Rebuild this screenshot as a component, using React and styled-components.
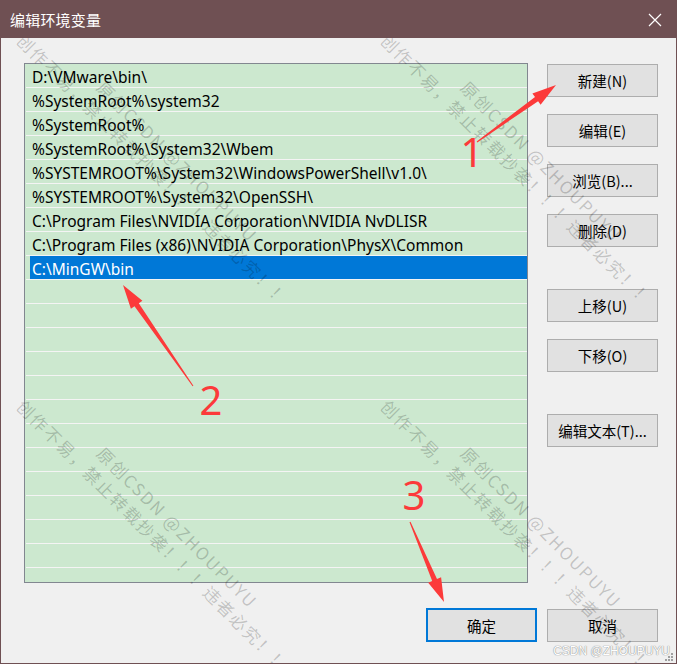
import React from "react";
import styled, { createGlobalStyle } from "styled-components";

const paths = [
  "D:\\VMware\\bin\\",
  "%SystemRoot%\\system32",
  "%SystemRoot%",
  "%SystemRoot%\\System32\\Wbem",
  "%SYSTEMROOT%\\System32\\WindowsPowerShell\\v1.0\\",
  "%SYSTEMROOT%\\System32\\OpenSSH\\",
  "C:\\Program Files\\NVIDIA Corporation\\NVIDIA NvDLISR",
  "C:\\Program Files (x86)\\NVIDIA Corporation\\PhysX\\Common",
  "C:\\MinGW\\bin",
];
const SELECTED = 8;
const TOTAL_ROWS = 22;

const sideButtons = [
  { label: "新建(N)" },
  { label: "编辑(E)" },
  { label: "浏览(B)..." },
  { label: "删除(D)" },
  { label: "上移(U)", gap: true },
  { label: "下移(O)" },
  { label: "编辑文本(T)...", gap: true },
];

// watermark tiles: origin of each rotated block
const tiles = [
  [44, 11],
  [408, 11],
  [44, 377],
  [408, 377],
];

// red annotation arrows (tail -> tip)
const arrows = [
  { tail: [477, 142], tip: [556, 85] },
  { tail: [193, 386], tip: [123, 285] },
  { tail: [410, 522], tip: [444, 602] },
];

const arrowPoints = ({ tail, tip }) => {
  const dx = tip[0] - tail[0];
  const dy = tip[1] - tail[1];
  const len = Math.hypot(dx, dy);
  const ux = dx / len;
  const uy = dy / len;
  const nx = -uy;
  const ny = ux;
  const headLen = 24;
  const headW = 7;
  const neckW = 2.6;
  const bx = tip[0] - ux * headLen;
  const by = tip[1] - uy * headLen;
  const p = (x, y) => `${x.toFixed(1)},${y.toFixed(1)}`;
  return [
    p(tail[0] + nx * 0.5, tail[1] + ny * 0.5),
    p(bx + nx * neckW, by + ny * neckW),
    p(bx + nx * headW, by + ny * headW),
    p(tip[0], tip[1]),
    p(bx - nx * headW, by - ny * headW),
    p(bx - nx * neckW, by - ny * neckW),
    p(tail[0] - nx * 0.5, tail[1] - ny * 0.5),
  ].join(" ");
};

const App = () => {
  return (
    <>
      <GlobalStyle />
      <Window>
        <TitleBar>
          <Title>编辑环境变量</Title>
          <CloseIcon width="14" height="14" viewBox="0 0 14 14">
            <path d="M1 1 L13 13 M13 1 L1 13" stroke="#fff" strokeWidth="1.2" />
          </CloseIcon>
        </TitleBar>

        <Content>
          <ListBox>
            {Array.from({ length: TOTAL_ROWS }).map((_, i) => (
              <Row key={i}>
                <Label $selected={i === SELECTED}>{paths[i] || ""}</Label>
              </Row>
            ))}
          </ListBox>
          <ButtonColumn>
            {sideButtons.map((b) => (
              <SideButton key={b.label} $gap={b.gap}>
                {b.label}
              </SideButton>
            ))}
          </ButtonColumn>
        </Content>

        <Footer>
          <DialogButton $primary>确定</DialogButton>
          <DialogButton>取消</DialogButton>
        </Footer>

        {tiles.map(([x, y], i) => (
          <Watermark key={i} style={{ left: x, top: y }}>
            <MarkLine $indent>原创CSDN @ZHOUPUYU</MarkLine>
            <MarkLine>创作不易，禁止转载抄袭！！！违者必究！！</MarkLine>
          </Watermark>
        ))}

        <Annotations width="677" height="664" viewBox="0 0 677 664">
          {arrows.map((a, i) => (
            <polygon key={i} points={arrowPoints(a)} fill="#fc3a3a" />
          ))}
          <Num x="472" y="167">1</Num>
          <Num x="211" y="415">2</Num>
          <Num x="414" y="510">3</Num>
        </Annotations>

        <Credit>CSDN @ZHOUPUYU</Credit>
        <Grip width="10" height="10" viewBox="0 0 10 10">
          {[
            [8, 2],
            [5, 5],
            [8, 5],
            [2, 8],
            [5, 8],
            [8, 8],
          ].map(([x, y]) => (
            <rect key={`${x}-${y}`} x={x - 1} y={y - 1} width="2" height="2" fill="#a0a0a0" />
          ))}
        </Grip>
      </Window>
    </>
  );
};

const GlobalStyle = createGlobalStyle`
  html, body {
    margin: 0;
    padding: 0;
    background: #f0f0f0;
  }
  * {
    box-sizing: border-box;
  }
`;

const Window = styled.div`
  position: relative;
  width: 677px;
  height: 664px;
  border: 1px solid #6f5053;
  background: #f0f0f0;
  display: flex;
  flex-direction: column;
  overflow: hidden;
  font-family: "Noto Sans CJK SC", sans-serif;
`;

const TitleBar = styled.div`
  position: relative;
  z-index: 3;
  height: 37px;
  flex-shrink: 0;
  background: #6f5053;
  display: flex;
  align-items: center;
  justify-content: space-between;
  padding: 0 14px 0 9px;
`;

const Title = styled.span`
  color: #fff;
  font-size: 15px;
  letter-spacing: 0.2px;
`;

const CloseIcon = styled.svg`
  display: block;
`;

const Content = styled.div`
  display: flex;
  padding: 25px 0 0 23px;
`;

const ListBox = styled.div`
  width: 504px;
  height: 520px;
  border: 1px solid #828790;
  background: #cce8cf;
  padding-left: 1px;
  overflow: hidden;
`;

const Row = styled.div`
  height: 24px;
  border-bottom: 1px solid #f4f4f4;
  display: flex;
`;

const Label = styled.div`
  flex: 1;
  margin-left: 4px;
  padding: 2px 0 0 2px;
  height: 23px;
  line-height: 23px;
  font-family: "Noto Sans", "Noto Sans CJK SC", sans-serif;
  font-size: 15.5px;
  white-space: nowrap;
  color: ${(p) => (p.$selected ? "#fff" : "#000")};
  background: ${(p) => (p.$selected ? "#0078d7" : "transparent")};
`;

const ButtonColumn = styled.div`
  display: flex;
  flex-direction: column;
  gap: 17px;
  margin-left: 19px;
  padding-top: 1px;
`;

const buttonBase = `
  width: 111px;
  height: 33px;
  background: #e1e1e1;
  border: 1px solid #adadad;
  color: #000;
  font-family: "Noto Sans CJK SC", sans-serif;
  font-size: 14.5px;
  display: flex;
  align-items: center;
  justify-content: center;
  padding: 0;
`;

const SideButton = styled.button`
  ${buttonBase}
  margin-top: ${(p) => (p.$gap ? "25px" : "0")};
`;

const Footer = styled.div`
  display: flex;
  justify-content: flex-end;
  align-items: center;
  gap: 10px;
  margin-top: 25px;
  padding-right: 18px;
`;

const DialogButton = styled.button`
  ${buttonBase}
  height: ${(p) => (p.$primary ? "34px" : "33px")};
  border: ${(p) => (p.$primary ? "2px solid #0078d7" : "1px solid #adadad")};
`;

const Watermark = styled.div`
  position: absolute;
  z-index: 2;
  transform: rotate(45deg);
  transform-origin: 0 0;
  pointer-events: none;
  white-space: nowrap;
`;

const MarkLine = styled.div`
  height: 23px;
  line-height: 23px;
  padding-left: ${(p) => (p.$indent ? "90px" : "0")};
  font-family: "Noto Sans CJK SC", sans-serif;
  font-size: 17px;
  letter-spacing: 1.8px;
  color: rgba(0, 0, 0, 0.2);
`;

const Annotations = styled.svg`
  position: absolute;
  left: -1px;
  top: -1px;
  z-index: 4;
  pointer-events: none;
`;

const Num = styled.text`
  font-family: "Noto Sans", sans-serif;
  font-size: 40px;
  fill: #fc3a3a;
  text-anchor: middle;
`;

const Credit = styled.span`
  position: absolute;
  z-index: 4;
  right: 6px;
  bottom: 5px;
  font-family: "Liberation Sans", sans-serif;
  font-size: 12px;
  color: #fff;
  text-shadow: 0 0 1px #8a8a8a, 0 0 1px #8a8a8a;
`;

const Grip = styled.svg`
  position: absolute;
  z-index: 4;
  right: 2px;
  bottom: 1px;
`;

export default App;
